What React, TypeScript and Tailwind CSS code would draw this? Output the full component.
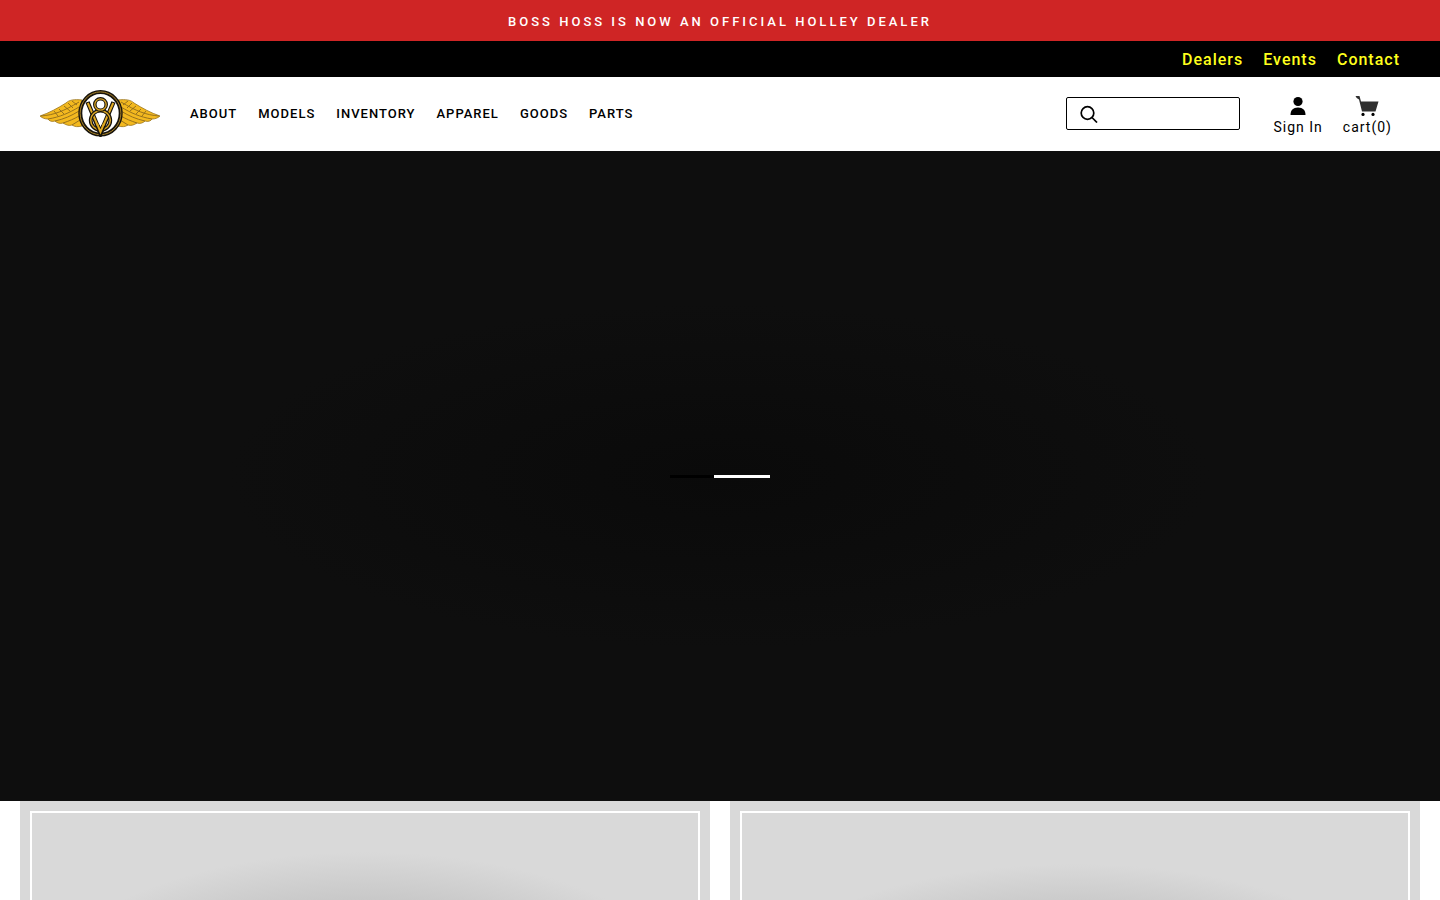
const topLinks = ["Dealers", "Events", "Contact"];

const navLinks = ["About", "Models", "Inventory", "Apparel", "Goods", "Parts"];

/** One wing of the emblem, drawn for the left side. */
function Wing() {
  return (
    <g>
      <path
        d="M42 10 C34 9 29 10 26 13 C18 18 9 23 0 26 C2 28 5 29 8 29 C9 31 12 32 15 31 C17 33 20 34 23 33 C26 35 29 36 32 35 C35 37 38 37 42 36 Z"
        fill="#f3b91f"
        stroke="#9a7418"
        strokeWidth="0.8"
      />
      <path
        d="M1 26 C14 25 24 21 39 12 M8 29 C20 27 29 23 39 17 M15 31 C24 29 31 26 39 21 M23 33 C29 31 34 29 39 26 M32 35 C35 33 37 32 40 30 M28 13 L33 18 M24 16 L30 21 M32 11 L37 15 M19 19 L24 24 M14 21 L18 26"
        fill="none"
        stroke="#8d6a1c"
        strokeWidth="0.9"
      />
    </g>
  );
}

/** Winged V8 emblem. */
function Logo() {
  return (
    <svg viewBox="0 0 120 47" className="h-[47px] w-[120px]" aria-hidden="true">
      <Wing />
      <g transform="translate(120 0) scale(-1 1)">
        <Wing />
      </g>
      <ellipse cx="60.5" cy="23.3" rx="20.2" ry="21.2" fill="#fff" stroke="#18140c" strokeWidth="4" />
      <ellipse cx="60.5" cy="23.3" rx="20.4" ry="21.4" fill="none" stroke="#b98e2a" strokeWidth="0.9" />
      {/* V */}
      <path d="M47.5 12 L60.5 43 L73.5 12" fill="none" stroke="#18140c" strokeWidth="4.4" />
      <path d="M47.8 13 L60.5 42 L73.2 13" fill="none" stroke="#e2ab22" strokeWidth="2" />
      {/* 8 */}
      <ellipse cx="60.5" cy="30.3" rx="9.8" ry="9.6" fill="none" stroke="#18140c" strokeWidth="3.8" />
      <ellipse cx="60.5" cy="30.3" rx="9.8" ry="9.6" fill="none" stroke="#d9a524" strokeWidth="1.5" />
      <circle cx="60.5" cy="14.5" r="5.7" fill="#fff" stroke="#18140c" strokeWidth="3.6" />
      <circle cx="60.5" cy="14.5" r="5.7" fill="none" stroke="#d9a524" strokeWidth="1.3" />
      {/* foot of the V, in front of the lower loop */}
      <path d="M57.5 35.5 L60.5 43 L63.5 35.5" fill="none" stroke="#18140c" strokeWidth="4.4" />
      <path d="M57.2 34 L60.5 42 L63.8 34" fill="none" stroke="#e2ab22" strokeWidth="2" />
    </svg>
  );
}

function SearchIcon() {
  return (
    <svg viewBox="0 0 18 18" className="size-[18px] shrink-0" fill="none" stroke="#000" strokeWidth="1.7" aria-hidden="true">
      <circle cx="7.5" cy="8" r="6.3" />
      <path d="M12 12.5 L17 17.5" />
    </svg>
  );
}

function UserIcon() {
  return (
    <svg viewBox="0 0 16 20" className="h-5 w-4" aria-hidden="true">
      <circle cx="8" cy="5.5" r="4.6" />
      <path d="M0.5 19 C0.5 14.5 3 11.6 8 11.6 C13 11.6 15.5 14.5 15.5 19 Z" />
    </svg>
  );
}

function CartIcon() {
  return (
    <svg viewBox="0 0 24 20" className="h-5 w-6" aria-hidden="true">
      <path d="M0.5 0 H4.5 L6 5.5 H23.5 L20.5 15.5 H7 L4 3.5 Q1.5 3 0.5 0 Z" fill="#303030" />
      <circle cx="8" cy="18.4" r="1.6" />
      <circle cx="18" cy="18.4" r="1.6" />
    </svg>
  );
}

function Header() {
  return (
    <header>
      <div className="flex h-[41px] items-center justify-center bg-[#cf2525] pt-0.5 text-[13px] font-medium uppercase tracking-[3px] text-white">
        Boss Hoss is now an official Holley dealer
      </div>

      <nav aria-label="Secondary" className="flex h-9 items-center justify-end gap-5 bg-black px-10 pt-0.5 text-base font-medium tracking-[1px] text-[#ffff1c]">
        {topLinks.map((label) => (
          <a key={label} href="#">
            {label}
          </a>
        ))}
      </nav>

      <div className="flex h-[74px] items-center bg-white px-10 pb-px">
        <a href="#" aria-label="Home" className="mr-[30px]">
          <Logo />
        </a>
        <nav aria-label="Main" className="flex gap-[21px] text-[13px] font-medium uppercase tracking-[1px]">
          {navLinks.map((label) => (
            <a key={label} href="#">
              {label}
            </a>
          ))}
        </nav>

        <label className="ml-auto flex h-[33px] w-[174px] items-center gap-2 rounded-xs border border-black px-[13px]">
          <SearchIcon />
          <input type="search" aria-label="Search" className="min-w-0 flex-1 text-sm outline-none" />
        </label>
        <div className="ml-[34px] mr-2 flex gap-5 pt-1.5 text-sm leading-[22px] tracking-[1px]">
          <a href="#" className="flex flex-col items-center">
            <UserIcon />
            Sign In
          </a>
          <a href="#" className="flex flex-col items-center">
            <CartIcon />
            cart(0)
          </a>
        </div>
      </div>
    </header>
  );
}

export default function App() {
  return (
    <div className="bg-white font-[Roboto,'Liberation_Sans',sans-serif] text-black">
      <Header />
      <main>
        {/* Slideshow, still loading */}
        <section
          aria-label="Slideshow"
          className="flex h-[650px] items-center justify-center bg-[#0e0e0e] bg-[radial-gradient(490px_172px_at_center,#0a0a0a,#0e0e0e)]"
        >
          <div className="flex h-[3px] w-[100px] justify-end bg-black">
            <div className="w-14 bg-white" />
          </div>
        </section>

        <section aria-label="Collections" className="grid grid-cols-2 gap-5 px-5">
          <a href="#" aria-label="Motorcycles" className="h-[408px] bg-[#d9d9d9] bg-[radial-gradient(335px_153px_at_center,#a4a4a4,#d9d9d9)] p-2.5">
            <div className="h-full border-2 border-white" />
          </a>
          <a href="#" aria-label="Trikes" className="h-[408px] bg-[#d9d9d9] bg-[radial-gradient(335px_141px_at_center,#a4a4a4,#d9d9d9)] p-2.5">
            <div className="h-full border-2 border-white" />
          </a>
        </section>
      </main>
    </div>
  );
}
